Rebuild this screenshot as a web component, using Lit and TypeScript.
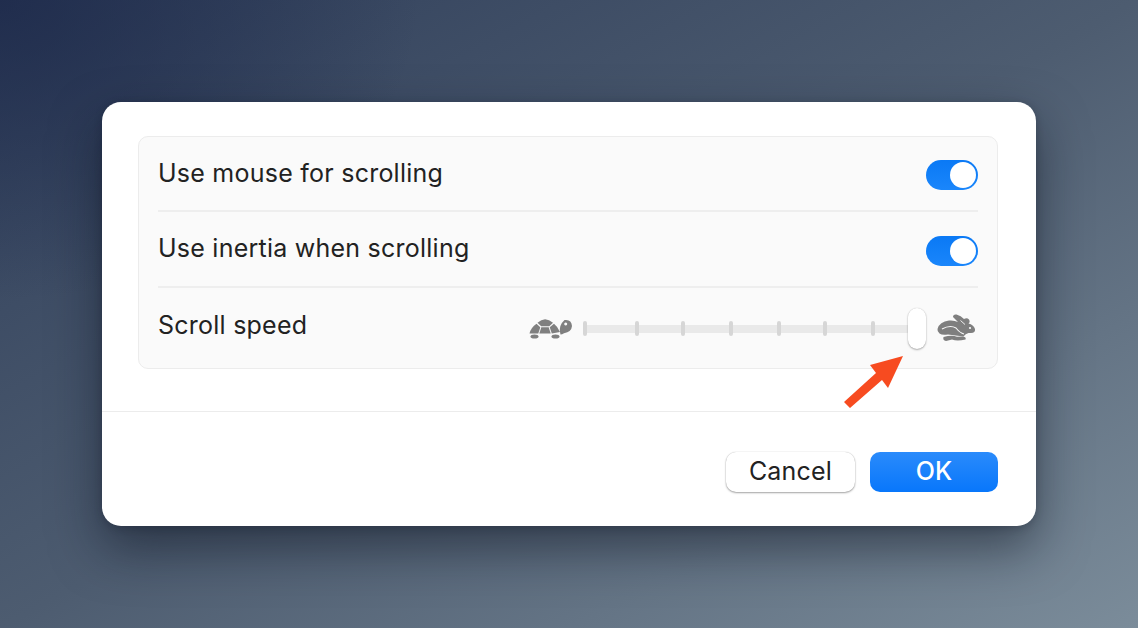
import { LitElement, html, css, svg } from "lit";
import { customElement } from "lit/decorators.js";

const turtle = html`<svg class="turtle" viewBox="0 0 44 24" width="44" height="24">
  <path d="M8.500 5.800Q16 -1.500 24 5.800L20.300 9.300H12.200Z"/>
  <path d="M7.500 6.800L11.300 10.300L9.300 16.500H0.500Q2 10.500 7.500 6.800Z"/>
  <path d="M12.300 10.300H19.700L21.700 16.500H10.300Z"/>
  <path d="M25 6.800Q29 10 31 15L22.800 16.500L20.700 10.300Z"/>
  <path fill-rule="evenodd" d="M31 15Q30 8 35.500 3Q42.500 2 43 9Q42.500 15 35 16.200Q33 17.500 31.500 17.500ZM36.700 5.500a1.500 1.500 0 1 0 .01 0Z"/>
  <ellipse cx="5.500" cy="19.500" rx="4" ry="2"/>
  <ellipse cx="26.500" cy="19.500" rx="4" ry="2"/>
</svg>`;

const rabbit = html`<svg class="rabbit" viewBox="0 0 40 30" width="40" height="30">
  <path d="M0.500 16Q2.500 8.500 12 7.500Q17 7 21 9L16 4Q16 1 19.500 1.500Q24 2.500 27 6Q30 4.500 32 6.500Q33.500 9 31.500 10.500Q36.500 11.500 38 16Q38.500 20 34 20H31.500Q28.500 20.500 26.500 23.500L11 21.500Q5 22.500 2.500 20.500Q0 18.500 0.500 16Z"/>
  <path d="M5 16Q13 11.500 19 15Q23 20 27 21" fill="none" stroke="#fafafa" stroke-width="1.100"/>
  <path d="M23.500 7.500L28 11.500" fill="none" stroke="#fafafa" stroke-width="0.900"/>
  <circle cx="33" cy="15" r="1.100" fill="#fafafa"/>
  <path d="M6.500 24Q15 21.800 20 23.800L26 23.500Q29.500 24 28.500 26.500Q20 28.500 15 26.500L9 28Q5.500 27.500 6.500 24Z"/>
</svg>`;

const arrow = svg`<polygon points="903,356 870,365 876,373 844,402 850,408 882,380 888,388" fill="#f74b20"/>`;

@customElement("app-root")
export class AppRoot extends LitElement {
  static styles = css`
    :host {
      display: block;
      position: relative;
      width: 1138px;
      height: 628px;
      overflow: hidden;
      box-sizing: border-box;
      padding: 102px 102px;
      background:
        radial-gradient(ellipse 420px 300px at 0% 0%, rgba(26, 38, 72, 0.7), rgba(26, 38, 72, 0) 100%),
        linear-gradient(to bottom right, #2f3e5a 0%, #4d5c70 50%, #7b8c9a 100%);
      font-family: Inter, "Noto Sans", sans-serif;
      color: #222;
    }
    .dialog {
      width: 934px;
      height: 424px;
      background: #fff;
      border-radius: 19px;
      box-shadow: 0 22px 50px rgba(10, 16, 30, 0.5), 0 2px 8px rgba(10, 16, 30, 0.2);
      display: flex;
      flex-direction: column;
      box-sizing: border-box;
    }
    .top {
      height: 310px;
      box-sizing: border-box;
      padding: 34px 38px 0 36px;
      border-bottom: 1px solid #ececec;
      flex: none;
    }
    .panel {
      height: 233px;
      box-sizing: border-box;
      background: #fafafa;
      border: 1px solid #ececec;
      border-radius: 10px;
      padding: 0 19px;
      display: flex;
      flex-direction: column;
    }
    .row {
      display: flex;
      align-items: center;
      justify-content: space-between;
      font-size: 25px;
      letter-spacing: 0.24px;
      box-sizing: border-box;
    }
    .row.a { height: 75px; border-bottom: 2px solid #eeeeee; }
    .row.b { height: 76px; border-bottom: 2px solid #eeeeee; }
    .row.c { flex: 1; }
    .label { position: relative; top: -1px; }
    .row.c .label { top: -3px; }
    .toggle {
      width: 52px;
      height: 30px;
      border-radius: 15px;
      background: linear-gradient(#0a79f5, #1a86fb);
      padding: 2px;
      box-sizing: border-box;
      display: flex;
      justify-content: flex-end;
      position: relative;
      top: 1px;
    }
    .row.b .toggle { top: 2px; }
    .knob {
      width: 26px;
      height: 26px;
      border-radius: 50%;
      background: #fff;
    }
    .speed {
      display: flex;
      align-items: center;
      margin-right: 1px;
    }
    .turtle, .rabbit { fill: #7f7f7f; display: block; flex: none; }
    .turtle { position: relative; top: 1px; }
    .rabbit { margin-left: 10px; }
    .slider {
      position: relative;
      width: 344px;
      height: 42px;
      margin-left: 10px;
      display: flex;
      align-items: center;
    }
    .track {
      flex: 1;
      height: 8px;
      margin-right: 16px;
      background: #e9e9e9;
      border-radius: 4px;
      position: relative;
      top: 1px;
    }
    .tick {
      position: absolute;
      top: -4px;
      width: 4px;
      height: 15px;
      background: #d6d6d6;
      border-radius: 2px;
    }
    .thumb {
      position: absolute;
      right: 1px;
      top: 1px;
      width: 18px;
      height: 41px;
      background: #fff;
      border-radius: 9px;
      box-shadow: 0 1px 2px rgba(0, 0, 0, 0.3), 0 0 1px rgba(0, 0, 0, 0.2);
    }
    .footer {
      flex: 1;
      display: flex;
      justify-content: flex-end;
      gap: 15px;
      padding: 40px 38px 0 0;
    }
    .btn {
      width: 129px;
      height: 40px;
      border-radius: 10px;
      font-size: 25px;
      display: flex;
      align-items: center;
      justify-content: center;
      box-sizing: border-box;
      padding-bottom: 2px;
    }
    .cancel {
      background: #fff;
      color: #222;
      letter-spacing: 0.2px;
      box-shadow: 0 1px 2px rgba(0, 0, 0, 0.35), 0 0 1px rgba(0, 0, 0, 0.25);
    }
    .ok {
      width: 128px;
      background: linear-gradient(#2a8bfb, #0877fb);
      color: #fff;
      font-weight: 500;
    }
    .arrow {
      position: absolute;
      left: 0;
      top: 0;
      pointer-events: none;
    }
  `;

  render() {
    const ticks = [0, 52, 98, 146, 194, 240, 288];
    return html`
      <div class="dialog">
        <div class="top">
          <div class="panel">
            <div class="row a"><span class="label">Use mouse for scrolling</span><div class="toggle"><div class="knob"></div></div></div>
            <div class="row b"><span class="label">Use inertia when scrolling</span><div class="toggle"><div class="knob"></div></div></div>
            <div class="row c">
              <span class="label">Scroll speed</span>
              <div class="speed">
                ${turtle}
                <div class="slider">
                  <div class="track">
                    ${ticks.map((x) => html`<div class="tick" style="left:${x}px"></div>`)}
                  </div>
                  <div class="thumb"></div>
                </div>
                ${rabbit}
              </div>
            </div>
          </div>
        </div>
        <div class="footer">
          <div class="btn cancel">Cancel</div>
          <div class="btn ok">OK</div>
        </div>
      </div>
      <svg class="arrow" width="1138" height="628" viewBox="0 0 1138 628">${arrow}</svg>
    `;
  }
}
